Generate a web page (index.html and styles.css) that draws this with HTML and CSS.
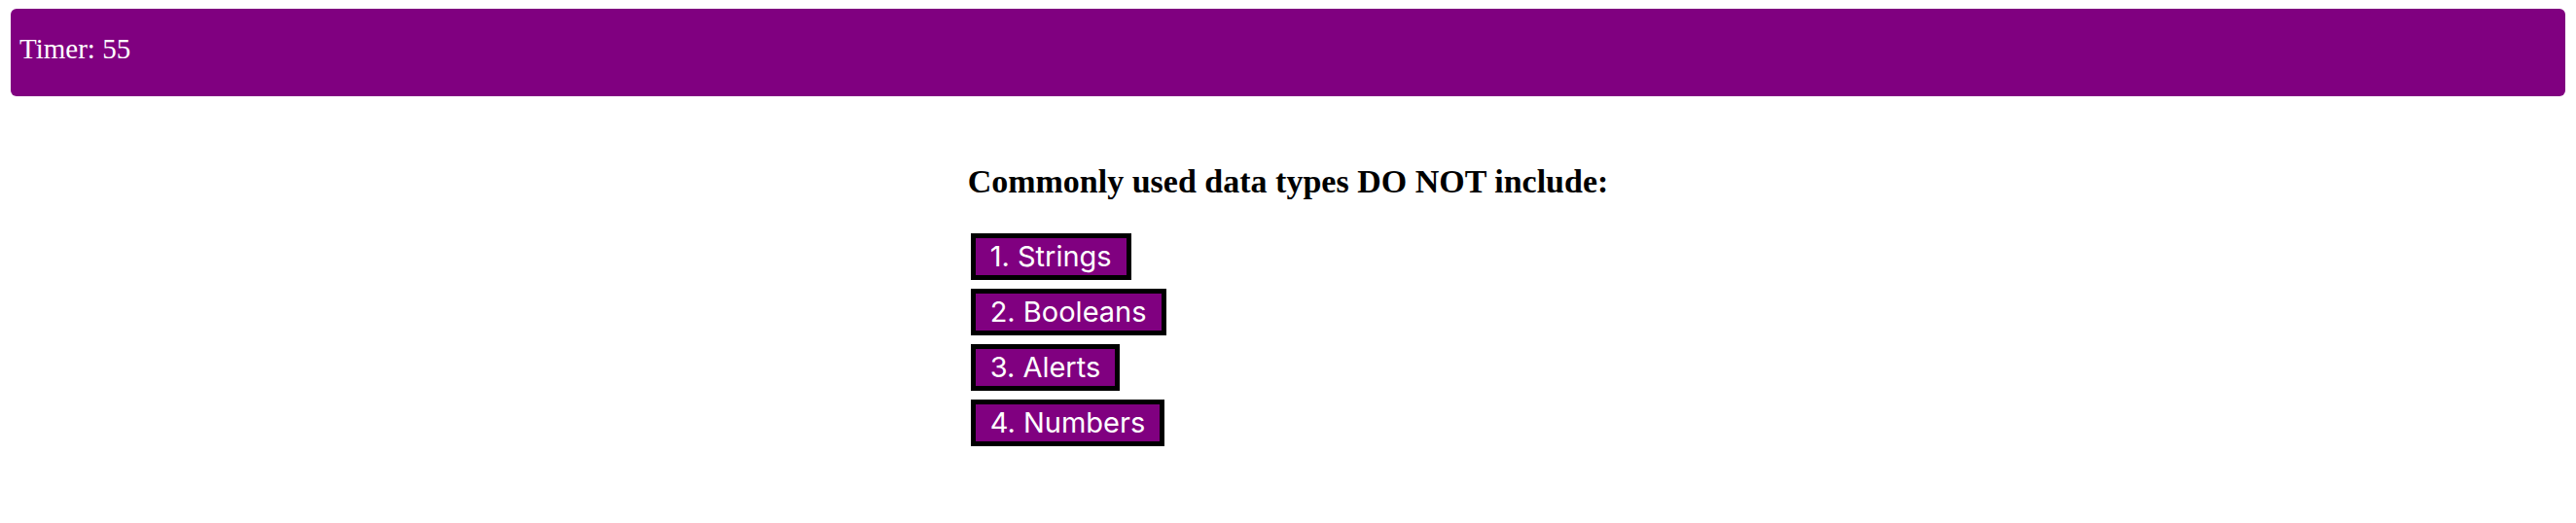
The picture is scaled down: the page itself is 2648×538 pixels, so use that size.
FILE: index.html
```html
<!DOCTYPE html>
<html>
<head>
<meta charset="utf-8">
<link rel="stylesheet" href="styles.css">
</head>
<body>
<header class="timer-bar">
  <span class="timer">Timer: 55</span>
</header>
<main class="quiz">
  <h3 class="question">Commonly used data types DO NOT include:</h3>
  <div class="choices">
    <button class="choice">1. Strings</button>
    <button class="choice">2. Booleans</button>
    <button class="choice">3. Alerts</button>
    <button class="choice">4. Numbers</button>
  </div>
</main>
</body>
</html>
```
FILE: styles.css
```css
html, body {
  margin: 0;
  background: #ffffff;
}
body {
  padding: 9px 11px;
  font-family: "Liberation Serif", "Times New Roman", serif;
}
.timer-bar {
  background: #800080;
  border-radius: 6px;
  padding: 26px 9px 33px;
}
.timer {
  color: #ffffff;
  font-size: 29px;
  line-height: 31px;
  display: block;
}
.quiz {
  width: fit-content;
  margin: 0 auto;
  padding-top: 34px;
}
.question {
  font-family: "Liberation Serif", "Times New Roman", serif;
  font-weight: bold;
  font-size: 34px;
  line-height: 39px;
  margin: 34px 0 34px;
  color: #000;
}
.choices {
  display: flex;
  flex-direction: column;
  align-items: flex-start;
  gap: 9px;
  padding-left: 3px;
}
.choice {
  font-family: Inter, "Liberation Sans", sans-serif;
  font-size: 29px;
  line-height: 34px;
  color: #ffffff;
  background: #800080;
  border: 5px solid #000000;
  border-radius: 0;
  padding: 2px 15px;
  margin: 0;
}
```
